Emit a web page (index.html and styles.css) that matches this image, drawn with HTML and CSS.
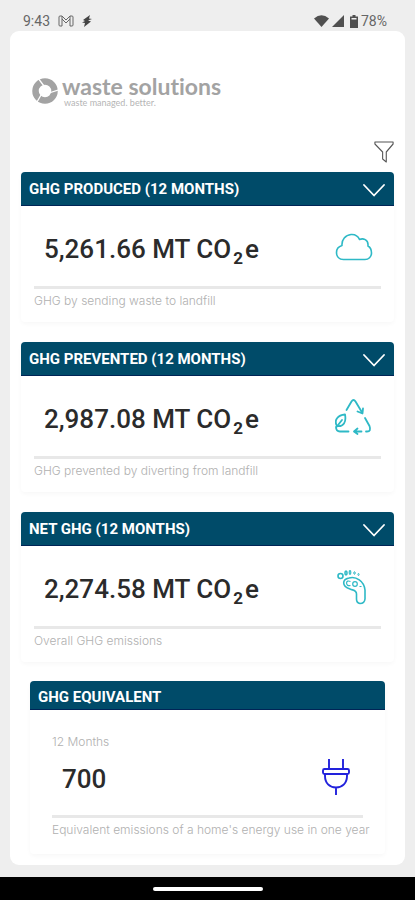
FILE: index.html
```html
<!DOCTYPE html>
<html lang="en">
<head>
    <meta charset="UTF-8">
    <meta name="viewport" content="width=device-width, initial-scale=1.0">
    <title>Waste Solutions - GHG</title>
    <link rel="stylesheet" href="styles.css">
</head>
<body>
    <div class="status-bar">
        <div class="status-group">
            <span>9:43</span>
            <svg width="16" height="12" viewBox="0 0 16 12" fill="none" stroke="#666" stroke-width="1">
                <path d="M4 1H2Q1 1 1 2V10Q1 11 2 11H4V4L8 8L12 4V11H14Q15 11 15 10V2Q15 1 14 1H12L8 5L4 1ZM4 1V4M12 1V4"/>
            </svg>
            <svg width="10" height="12" viewBox="0 0 10 12" fill="#444">
                <path d="M8 0L1 5L3 6L0 7.500L3 8L2 12L9 6.500L6 5.500L10 4L7 3.500Z"/>
            </svg>
        </div>
        <div class="status-group status-right">
            <svg width="15" height="12" viewBox="0 0 15 12" fill="#505050">
                <path d="M0 3.500Q7.500-3 15 3.500L7.500 12Z"/>
            </svg>
            <svg width="12" height="12" viewBox="0 0 12 12" fill="#505050">
                <path d="M12 0V12H0Z"/>
            </svg>
            <svg class="battery" width="8" height="13" viewBox="0 0 8 13" fill="#505050">
                <path d="M2.500 0H5.500V1.500H8V13H0V1.500H2.500ZM1.500 3V4.500H6.500V3Z" fill-rule="evenodd"/>
            </svg>
            <span>78%</span>
        </div>
    </div>

    <main class="panel">
        <div class="logo">
            <svg width="26" height="26" viewBox="0 0 26 26" fill="none">
                <circle cx="13" cy="13" r="9.500" stroke="#a3a3a3" stroke-width="6.500"/>
                <path d="M6 0L12 8M26 12L17 15M5 24L9 17" stroke="#fff" stroke-width="1.300"/>
            </svg>
            <div class="logo-text">
                <div class="logo-name">waste solutions</div>
                <div class="logo-tagline">waste managed. better.</div>
            </div>
        </div>

        <div class="toolbar">
            <button class="icon-button" aria-label="Filter">
                <svg width="20" height="22" viewBox="0 0 22 22" preserveAspectRatio="none" fill="none" stroke="#555" stroke-width="1.200" stroke-linejoin="round">
                    <path d="M1 1H21V3L13.500 11V21L9.500 18V11L1 3Z"/>
                </svg>
            </button>
        </div>

        <section class="card">
            <div class="card-header">
                <h2>GHG PRODUCED (12 MONTHS)</h2>
                <button class="icon-button" aria-label="Toggle GHG produced">
                    <svg width="22" height="13" viewBox="0 0 22 13" fill="none" stroke="#fff" stroke-width="1.800" stroke-linecap="round" stroke-linejoin="round">
                        <path d="M1 1L11 11.500L21 1"/>
                    </svg>
                </button>
            </div>
            <div class="card-body">
                <div class="card-row">
                    <div class="value">5,261.66 MT CO<sub>2</sub>e</div>
                    <svg width="38" height="38" viewBox="0 0 38 38" fill="none" stroke="#2eb9c6" stroke-width="1.600" stroke-linejoin="round">
                        <path d="M8.500 31.500C4 31.500 1.500 28.500 1.500 24.500C1.500 21 3.500 18.500 7 17.500C6.500 11.500 10.500 7 16 6.500C20 6.200 23 8 24.500 11.500C28.500 9.800 33 12 33 16.500V18C35.500 19.500 36.500 22 36.500 25C36.500 29 33.500 31.500 30 31.500Z"/>
                    </svg>
                </div>
                <p class="caption">GHG by sending waste to landfill</p>
            </div>
        </section>

        <section class="card">
            <div class="card-header">
                <h2>GHG PREVENTED (12 MONTHS)</h2>
                <button class="icon-button" aria-label="Toggle GHG prevented">
                    <svg width="22" height="13" viewBox="0 0 22 13" fill="none" stroke="#fff" stroke-width="1.800" stroke-linecap="round" stroke-linejoin="round">
                        <path d="M1 1L11 11.500L21 1"/>
                    </svg>
                </button>
            </div>
            <div class="card-body">
                <div class="card-row">
                    <div class="value">2,987.08 MT CO<sub>2</sub>e</div>
                    <svg width="38" height="38" viewBox="0 0 38 38" fill="none" stroke="#2eb9c6" stroke-width="1.800" stroke-linecap="round" stroke-linejoin="round">
                        <path d="M11.500 12L16.500 3.500Q18.500 0.500 20.500 3.500L26.500 13.500M28 10.500L27.500 15.500L22.500 13.500"/>
                        <path d="M30 20L34.500 28Q36.500 33.500 32 33.500H31M26.500 33.500H19M22.500 30.500L19 33.500L22.500 36"/>
                        <path d="M13.500 33.500H5Q1 33.500 1 29M1.500 29L7 22"/>
                        <path d="M2 28C-1.500 22 3 17 10 16.500C11.500 24 8.500 29 2 28Z"/>
                    </svg>
                </div>
                <p class="caption">GHG prevented by diverting from landfill</p>
            </div>
        </section>

        <section class="card">
            <div class="card-header">
                <h2>NET GHG (12 MONTHS)</h2>
                <button class="icon-button" aria-label="Toggle net GHG">
                    <svg width="22" height="13" viewBox="0 0 22 13" fill="none" stroke="#fff" stroke-width="1.800" stroke-linecap="round" stroke-linejoin="round">
                        <path d="M1 1L11 11.500L21 1"/>
                    </svg>
                </button>
            </div>
            <div class="card-body">
                <div class="card-row">
                    <div class="value">2,274.58 MT CO<sub>2</sub>e</div>
                    <svg width="38" height="38" viewBox="0 0 38 38" fill="none" stroke="#2eb9c6" stroke-width="1.600" stroke-linejoin="round">
                        <path d="M14 10C21 8 29 13 30 22V31Q29.500 35.500 25 35.500Q21.500 35 21.500 31V26C21.500 22 18.500 22.500 15 21C6.500 18 7 11.500 14 10Z"/>
                        <circle cx="5.500" cy="8" r="2.500"/>
                        <ellipse cx="11" cy="5" rx="1" ry="2"/>
                        <ellipse cx="15" cy="4.500" rx="0.800" ry="1.800" stroke-width="1.200"/>
                        <ellipse cx="19.500" cy="5" rx="0.700" ry="1.300" stroke-width="1"/>
                        <ellipse cx="23.500" cy="6.500" rx="0.600" ry="1" stroke-width="1"/>
                        <path d="M15.500 13.500Q12 12 11.500 15Q12 18.500 15.500 17.500M24.500 18.500H26.500" stroke-width="1.200"/>
                        <circle cx="20" cy="16" r="2.300" stroke-width="1.200"/>
                    </svg>
                </div>
                <p class="caption">Overall GHG emissions</p>
            </div>
        </section>

        <section class="card card-inset">
            <div class="card-header">
                <h2>GHG EQUIVALENT</h2>
            </div>
            <div class="card-body">
                <p class="period">12 Months</p>
                <div class="card-row">
                    <div class="value">700</div>
                    <svg width="30" height="38" viewBox="0 0 30 38" fill="none" stroke="#2222dc" stroke-width="1.900" stroke-linejoin="round">
                        <path d="M8 1V10.500M22 1V10.500M4 16V18C4 25 8.500 29.500 15 29.500S26 25 26 18V16M15 29.500V37"/>
                        <rect x="2" y="11" width="26" height="5" rx="1.500"/>
                    </svg>
                </div>
                <p class="caption">Equivalent emissions of a home's energy use in one year</p>
            </div>
        </section>
    </main>

    <div class="nav-bar">
        <div class="nav-handle"></div>
    </div>
</body>
</html>
```
FILE: styles.css
```css
* {
    box-sizing: border-box;
}
body {
    display: flex;
    flex-direction: column;
    min-height: 100vh;
    margin: 0;
    background: #eeeeee;
    font-family: Roboto, sans-serif;
    color: #2b2b2b;
}
h2, p {
    margin: 0;
}
svg {
    display: block;
    flex-shrink: 0;
}
.status-bar {
    display: flex;
    justify-content: space-between;
    align-items: flex-end;
    padding: 13px 28px 2px 23px;
    font-size: 14px;
    line-height: 16px;
    color: #666;
}
.status-group {
    display: flex;
    align-items: center;
    gap: 8px;
}
.status-right {
    gap: 3px;
}
.battery {
    margin-left: 3px;
}
.panel {
    flex: 1;
    margin: 0 10px 12px;
    padding: 43px 11px 8px;
    background: #fff;
    border-radius: 9px;
}
.logo {
    display: flex;
    align-items: center;
    gap: 4px;
    padding-left: 11px;
    font-family: Lato, sans-serif;
    font-variant-ligatures: none;
    color: #a3a3a3;
}
.logo-name {
    font-size: 23px;
    font-weight: 700;
    line-height: 24px;
}
.logo-tagline {
    padding-left: 2px;
    font-size: 9px;
    line-height: 10px;
    color: #b5b5b5;
}
.toolbar {
    display: flex;
    justify-content: flex-end;
    padding: 33px 0 9px;
}
.icon-button {
    padding: 0;
    border: none;
    background: none;
    cursor: pointer;
}
.card {
    margin-bottom: 20px;
    border-radius: 4px;
    box-shadow: 0 2px 4px rgba(0, 0, 0, 0.03);
}
.card-header {
    display: flex;
    justify-content: space-between;
    align-items: center;
    height: 34px;
    padding: 0 9px 0 8px;
    background: #004b69;
    border-bottom: 1px solid #002456;
    border-radius: 4px 4px 0 0;
}
.card-header h2 {
    font-size: 15px;
    font-weight: 700;
    line-height: 18px;
    color: #fff;
}
.card-header .icon-button {
    padding-top: 4px;
}
.card-body {
    padding: 22px 13px 13px;
}
.card-row {
    display: flex;
    justify-content: space-between;
    align-items: center;
    height: 61px;
    padding: 0 8px 20px 10px;
    border-bottom: 3px solid #e8e8e8;
}
.value {
    padding-top: 4px;
    font-size: 26px;
    font-weight: 500;
    line-height: 32px;
}
.value sub {
    padding: 0 2px;
    font-size: 17px;
    font-weight: 700;
    line-height: 0;
}
.caption, .period {
    font-family: Inter, sans-serif;
    font-size: 12px;
    font-weight: 300;
    line-height: 16px;
    color: #b0b0b0;
}
.caption {
    padding-top: 4px;
    white-space: nowrap;
}
.card-inset {
    margin: -1px 9px 0;
}
.card-inset .card-header {
    height: 29px;
    padding-top: 3px;
}
.card-inset .card-body {
    padding: 24px 22px 16px;
}
.card-inset .card-row {
    height: 68px;
    padding-right: 12px;
    padding-bottom: 12px;
}
.nav-bar {
    display: flex;
    justify-content: center;
    align-items: center;
    height: 23px;
    background: #000;
}
.nav-handle {
    width: 110px;
    height: 4px;
    border-radius: 2px;
    background: #fff;
}
```
